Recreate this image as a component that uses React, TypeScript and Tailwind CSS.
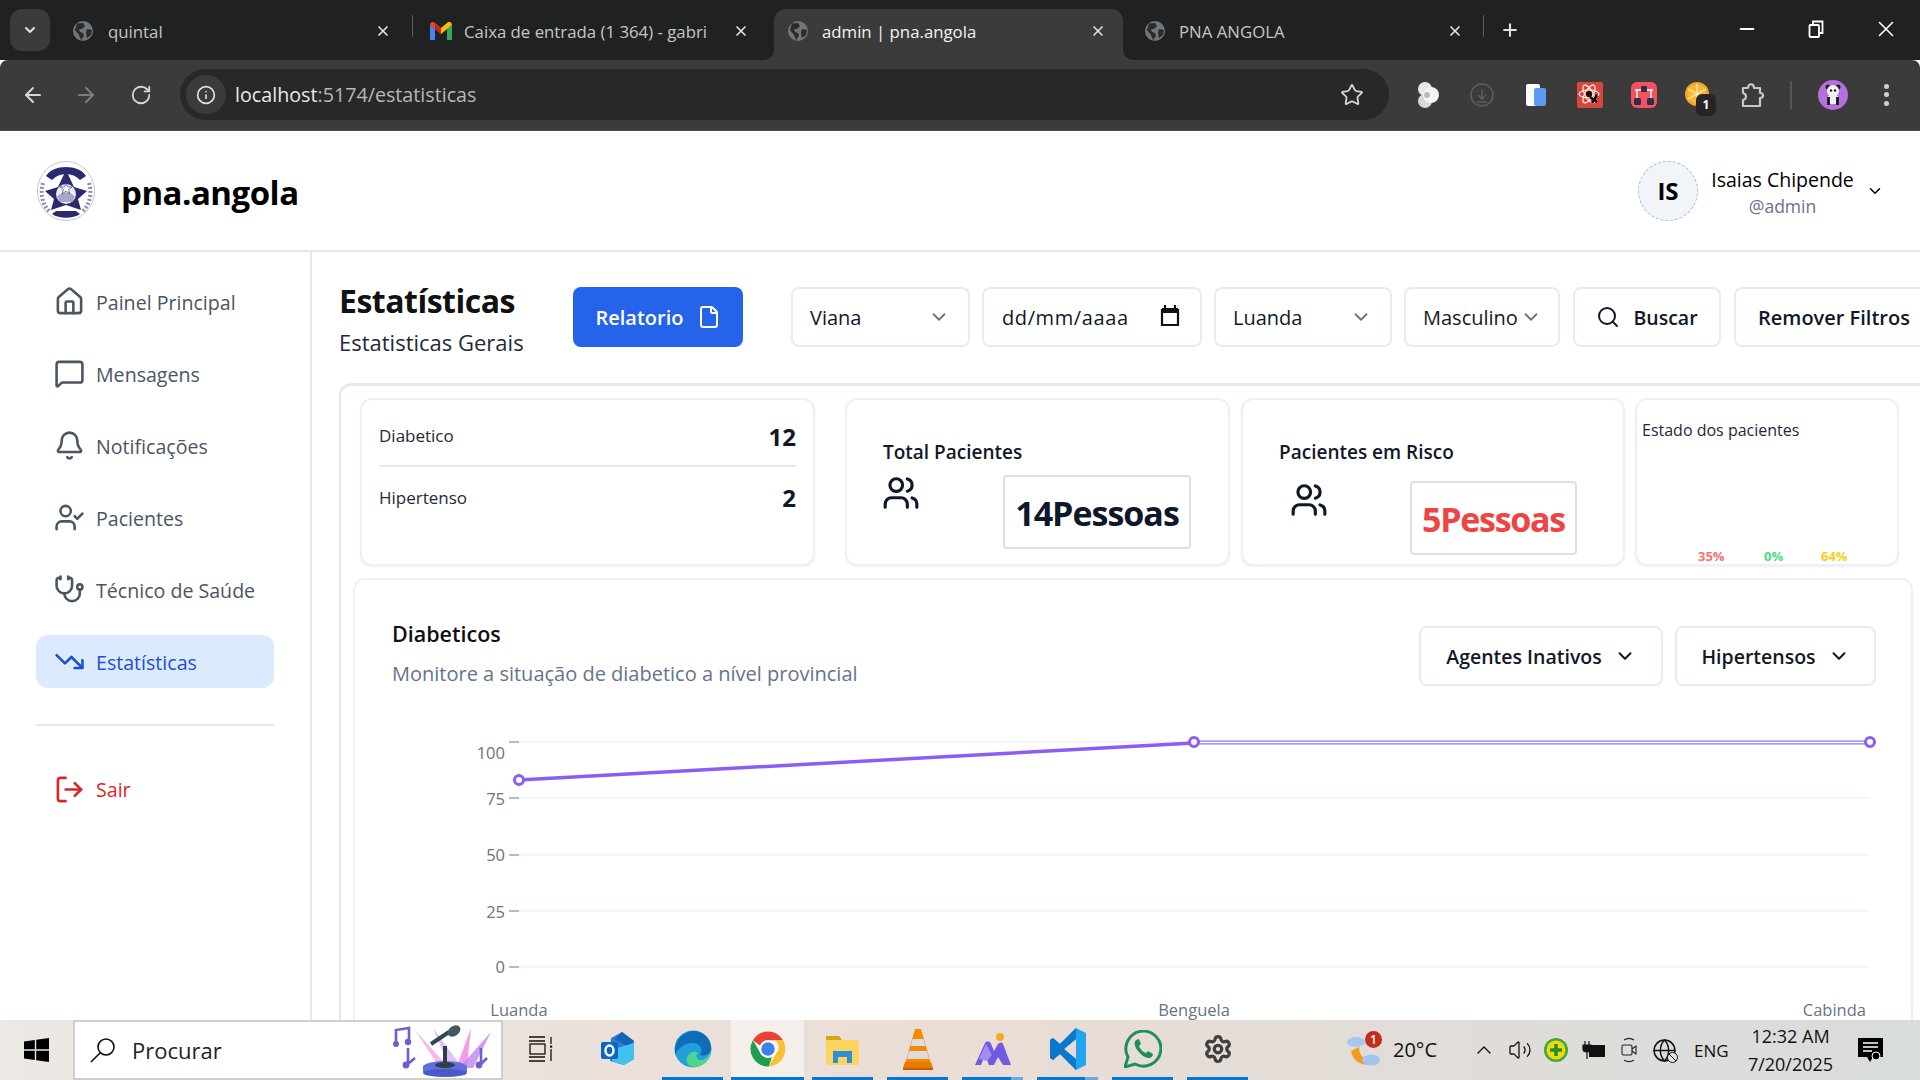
import React from "react";
import { ArrowLeft, ArrowRight, RotateCw, Info, Star, Minus, X, Plus, ChevronDown, ChevronUp, House, MessageSquare, Bell, UserCheck, Stethoscope, TrendingDown, LogOut, File, Search, Users, Volume2, Globe, Settings } from "lucide-react";

const TabGlobe = () => (
  <svg width="20" height="20" viewBox="0 0 20 20" className="shrink-0">
    <circle cx="10" cy="10" r="10" fill="#70757a" />
    <path d="M4 2.5 L10 2 L12 5 L9 8 L6 8 L7 11 L10 12 L11 15 L8 19 L6 14 L2 9 Z M14 8 L19 9 L18 14 L14 17 L13 12 Z" fill="#2a2c2c" />
  </svg>
);

const Gmail = () => (
  <svg width="22" height="18" viewBox="0 0 22 18" className="shrink-0">
    <path d="M0 3 L0 18 L5 18 L5 7 Z" fill="#4285f4" />
    <path d="M17 7 L17 18 L22 18 L22 3 Z" fill="#34a853" />
    <path d="M0 3 C0 0 3 -1 5 1 L11 6 L11 12 L0 3 Z" fill="#ea4335" />
    <path d="M11 6 L17 1 C19 -1 22 0 22 3 L11 12 Z" fill="#fbbc04" />
    <path d="M5 2 L11 7 L11 12 L5 7 Z" fill="#c5221f" />
  </svg>
);

const Tab = ({ w, pl, pr, gap, icon, text, active }: { w: string; pl: string; pr: string; gap: string; icon: React.ReactNode; text: string; active?: boolean }) => (
  <div className={`relative flex h-[51px] shrink-0 items-center pb-[8px] ${w} ${pl} ${pr} ${gap} ${active ? "rounded-t-xl bg-[#3b3b3b]" : ""}`}>
    {active && (
      <>
        <span className="absolute bottom-0 left-[-10px] h-[10px] w-[10px] bg-[#3b3b3b]"><span className="block h-full w-full rounded-br-[10px] bg-[#202221]" /></span>
        <span className="absolute bottom-0 right-[-10px] h-[10px] w-[10px] bg-[#3b3b3b]"><span className="block h-full w-full rounded-bl-[10px] bg-[#202221]" /></span>
      </>
    )}
    {icon}
    <span className={`mt-[2px] min-w-0 flex-1 overflow-hidden text-[16.8px] whitespace-nowrap ${active ? "text-[#f1f3f4]" : "text-[#c4c7c5]"}`}>{text}</span>
    <X size={16} strokeWidth={2.5} className="shrink-0 text-[#e3e3e3]" />
  </div>
);

const Sep = () => <div className="mb-[9px] h-[22px] w-px shrink-0 self-center bg-[#5a5c5c]" />;

const Ext = ({ children }: { children: React.ReactNode }) => (
  <div className="flex h-full w-[54px] shrink-0 items-center justify-center">{children}</div>
);

const Browser = () => (
  <div className="shrink-0 [font-family:'Open_Sans',sans-serif]">
    <div className="flex h-[60px] items-end bg-[#202221]">
      <div className="mb-[9px] ml-[10px] flex h-[42px] w-[40px] shrink-0 items-center justify-center rounded-xl bg-[#3b3b3b]">
        <ChevronDown size={16} strokeWidth={3} className="text-[#e3e3e3]" />
      </div>
      <div className="w-[12px] shrink-0" />
      <Tab w="w-[350px]" pl="pl-[11px]" pr="pr-[21px]" gap="gap-[15px]" icon={<TabGlobe />} text="quintal" />
      <Sep />
      <Tab w="w-[361px]" pl="pl-[17px]" pr="pr-[25px]" gap="gap-[12px]" icon={<Gmail />} text="Caixa de entrada (1 364) - gabri" />
      <Tab active w="w-[349px]" pl="pl-[14px]" pr="pr-[17px]" gap="gap-[14px]" icon={<TabGlobe />} text="admin | pna.angola" />
      <Tab w="w-[360px]" pl="pl-[22px]" pr="pr-[20px]" gap="gap-[14px]" icon={<TabGlobe />} text="PNA ANGOLA" />
      <Sep />
      <div className="mb-[9px] flex h-[42px] w-[52px] shrink-0 items-center justify-center">
        <Plus size={20} strokeWidth={2.5} className="text-[#e3e3e3]" />
      </div>
      <div className="ml-auto flex h-[60px] shrink-0 items-center pb-[3px] text-white">
        <div className="flex w-[68px] justify-center"><Minus size={22} strokeWidth={2} /></div>
        <div className="flex w-[70px] justify-center">
          <svg width="16" height="18" viewBox="0 0 16 18" fill="none" stroke="white" strokeWidth="1.8"><rect x="1.5" y="5" width="9.5" height="12" rx="1" /><path d="M5 5 V1.5 H14.5 V13 H11" /></svg>
        </div>
        <div className="flex w-[69px] justify-center"><X size={26} strokeWidth={1.5} /></div>
      </div>
    </div>
    <div className="flex h-[71px] items-center rounded-t-lg border-b border-[#4a4a4a] bg-[#3b3b3b] pb-[1px]">
      <div className="flex w-[66px] shrink-0 justify-center"><ArrowLeft size={24} className="text-[#d5d5d5]" strokeWidth={2} /></div>
      <div className="flex w-[40px] shrink-0 justify-center"><ArrowRight size={24} className="text-[#7d7d7d]" strokeWidth={2} /></div>
      <div className="ml-[15px] flex w-[40px] shrink-0 justify-center"><RotateCw size={22} className="text-[#d5d5d5]" strokeWidth={2} /></div>
      <div className="ml-[19px] flex h-[51px] w-[1209px] shrink-0 items-center rounded-full bg-[#282828] pl-[6px]">
        <div className="flex h-[39px] w-[40px] items-center justify-center rounded-full bg-[#3b3b3b]"><Info size={20} className="text-[#e3e3e3]" strokeWidth={2} /></div>
        <span className="ml-[9px] text-[19.7px] leading-none text-[#e8eaed]">localhost<span className="text-[#b5b8bb]">:5174/estatisticas</span></span>
        <Star size={24} strokeWidth={1.8} className="mr-[25px] ml-auto text-[#d5d5d5]" />
      </div>
      <div className="ml-[12px] flex h-full shrink-0 items-center">
        <Ext>
          <svg width="24" height="26" viewBox="0 0 24 26"><circle cx="9" cy="7" r="7" fill="#e8e8e8" /><circle cx="9" cy="19" r="7" fill="#d8d8d8" /><circle cx="15" cy="13" r="8" fill="#f4f4f4" /><circle cx="11" cy="13" r="3" fill="#bbb" /></svg>
        </Ext>
        <Ext>
          <svg width="26" height="26" viewBox="0 0 26 26" fill="none" stroke="#5c5c5c" strokeWidth="1.6"><circle cx="13" cy="13" r="11" /><path d="M13 7 V17 M9 13 L13 17 L17 13 M8 20 H18" /></svg>
        </Ext>
        <Ext>
          <svg width="22" height="24" viewBox="0 0 22 24"><rect x="1" y="1" width="14" height="22" rx="2" fill="#fff" /><rect x="9" y="5" width="12" height="18" rx="2" fill="#5c9cf5" /></svg>
        </Ext>
        <Ext>
          <svg width="26" height="26" viewBox="0 0 26 26"><rect width="26" height="26" rx="2" fill="#d9473a" /><g fill="none" stroke="#fff" strokeWidth="1.1"><ellipse cx="12" cy="12" rx="10" ry="4" /><ellipse cx="12" cy="12" rx="10" ry="4" transform="rotate(60 12 12)" /><ellipse cx="12" cy="12" rx="10" ry="4" transform="rotate(120 12 12)" /></g><circle cx="12" cy="12" r="3" fill="#200" /><path d="M13 15 L20 20 M15 21 L20 13" stroke="#111" strokeWidth="2.4" /></svg>
        </Ext>
        <Ext>
          <svg width="26" height="26" viewBox="0 0 26 26"><rect width="26" height="26" rx="6" fill="#f4525e" /><rect x="10" y="4" width="6" height="6" rx="1" fill="#27324a" /><rect x="3" y="16" width="7" height="7" rx="1.5" fill="#27324a" /><rect x="16" y="16" width="7" height="7" rx="1.5" fill="#27324a" /><path d="M4 8 H10 M16 8 H22 M6 8 V16 M20 8 V16" stroke="#fff" strokeWidth="1.4" fill="none" /></svg>
        </Ext>
        <Ext>
          <div className="relative h-[26px] w-[26px]">
            <svg width="24" height="24" viewBox="0 0 24 24"><circle cx="12" cy="12" r="12" fill="#f5a623" /><circle cx="12" cy="12" r="9.5" fill="#fbb836" /><path d="M12 12 L12 2 M12 12 L21 7 M12 12 L21 17 M12 12 L12 22 M12 12 L3 17 M12 12 L3 7" stroke="#ffe9b5" strokeWidth="1.3" /></svg>
            <span className="absolute top-[12px] left-[11px] flex h-[22px] w-[20px] items-center justify-center rounded-md bg-[#252525] text-[12px] leading-none font-bold text-white">1</span>
          </div>
        </Ext>
        <Ext>
          <svg width="26" height="26" viewBox="0 0 26 26" fill="none" stroke="#c7c7c7" strokeWidth="2.2" strokeLinejoin="round"><path d="M4 6 H9 C9 1 15 1 15 6 H21 V11 C25 11 25 16 21 16 V24 H4 V18 C8 17 8 12 4 11 Z" /></svg>
        </Ext>
        <div className="ml-[11px] h-[28px] w-[2px] shrink-0 bg-[#565656]" />
        <div className="ml-[26px] flex h-[30px] w-[30px] shrink-0 items-center justify-center rounded-full bg-[#b56fe0]">
          <svg width="18" height="24" viewBox="0 0 18 24"><circle cx="4" cy="4" r="2.5" fill="#222" /><circle cx="14" cy="4" r="2.5" fill="#222" /><circle cx="9" cy="8" r="6" fill="#f2f2f2" /><rect x="4" y="13" width="10" height="8" fill="#f2f2f2" /><path d="M3 14 H6 V22 H3 Z M12 14 H15 V22 H12 Z" fill="#222" /><circle cx="7" cy="7.5" r="1.2" fill="#222" /><circle cx="11" cy="7.5" r="1.2" fill="#222" /></svg>
        </div>
        <div className="ml-[36px] flex h-[22px] w-[6px] shrink-0 flex-col justify-between">
          <span className="h-[5px] w-[5px] rounded-full bg-[#cfcfcf]" />
          <span className="h-[5px] w-[5px] rounded-full bg-[#cfcfcf]" />
          <span className="h-[5px] w-[5px] rounded-full bg-[#cfcfcf]" />
        </div>
      </div>
    </div>
  </div>
);

const Emblem = () => (
  <svg width="58" height="60" viewBox="0 0 58 60" className="shrink-0">
    <ellipse cx="29" cy="30" rx="28.5" ry="29.5" fill="#fff" stroke="#c5c6da" strokeWidth="1" />
    <path d="M6 22 C3 32 5 44 13 51 M52 22 C55 32 53 44 45 51" stroke="#8c8fb5" strokeWidth="4" fill="none" strokeDasharray="2 2" />
    <path d="M9 15 C16 3 42 3 49 15 L43 19 C36 11 22 11 15 19 Z" fill="#2c2a6e" />
    <path d="M8 30 L21 26 L29 9 L37 26 L50 30 L41 38 L44 49 L29 44 L14 49 L17 38 Z" fill="#2c2a6e" />
    <circle cx="29" cy="33" r="10" fill="#ecedf5" />
    <path d="M20 36 C24 30 34 30 38 36 L35 41 H23 Z" fill="#a8a8c8" />
    <path d="M29 22 L30.6 26 L35 26 L31.5 28.5 L33 33 L29 30 L25 33 L26.5 28.5 L23 26 L27.4 26 Z" fill="#fff" stroke="#2c2a6e" strokeWidth="0.6" />
    <path d="M15 53 C22 58 36 58 43 53 L39 50 H19 Z" fill="#2c2a6e" />
  </svg>
);

const Header = () => (
  <div className="flex h-[121px] shrink-0 items-center border-b-2 border-[#e5e7eb] bg-white pr-[36px] pl-[37px]">
    <Emblem />
    <span className="mt-[3px] ml-[26px] text-[33px] leading-none font-bold tracking-[-0.5px] text-black">pna.angola</span>
    <div className="ml-auto flex items-center">
      <div className="flex h-[60px] w-[60px] shrink-0 items-center justify-center rounded-full border border-dashed border-[#a9b9dc] bg-[#f1f5f9] text-[24px] font-bold text-black">IS</div>
      <div className="mt-[3px] ml-[12px] flex w-[145px] flex-col items-center">
        <span className="text-[19.5px] leading-[28px] whitespace-nowrap text-black">Isaias Chipende</span>
        <span className="text-[17.5px] leading-[24px] text-[#64748b]">@admin</span>
      </div>
      <ChevronDown size={18} strokeWidth={2} className="ml-[11px] shrink-0 text-black" />
    </div>
  </div>
);

const navItems = [
  { label: "Painel Principal", Icon: House },
  { label: "Mensagens", Icon: MessageSquare },
  { label: "Notificações", Icon: Bell },
  { label: "Pacientes", Icon: UserCheck },
  { label: "Técnico de Saúde", Icon: Stethoscope },
  { label: "Estatísticas", Icon: TrendingDown, active: true },
];

const Sidebar = () => (
  <div className="flex w-[312px] shrink-0 flex-col border-r-2 border-[#e5e7eb] bg-white px-[36px] pt-[23px]">
    <div className="flex flex-col gap-[19px]">
      {navItems.map(({ label, Icon, active }) => (
        <div key={label} className={`flex h-[53px] items-center gap-[11px] rounded-xl pl-[18px] text-[19.6px] ${active ? "bg-[#dbeafe] text-[#1d4ed8]" : "text-[#4b5563]"}`}>
          <Icon size={31} strokeWidth={2} className="shrink-0" />
          <span className="mt-[2px]">{label}</span>
        </div>
      ))}
    </div>
    <div className="mt-[36px] h-[2px] bg-[#e5e7eb]" />
    <div className="mt-[37px] flex h-[53px] items-center gap-[11px] pl-[18px] text-[19.6px] text-[#dc2626]">
      <LogOut size={31} strokeWidth={2} className="shrink-0" />
      <span>Sair</span>
    </div>
  </div>
);

const btn = "flex h-[60px] shrink-0 items-center rounded-lg border-2 border-[#e8ebf1] bg-white pt-[2px] text-[20px] text-[#111827]";

const Filters = () => (
  <div className="flex items-start">
    <div className="w-[234px] shrink-0">
      <div className="mt-[-4px] text-[32px] leading-[36px] font-bold tracking-[-0.5px] text-[#111]">Estatísticas</div>
      <div className="mt-[9px] text-[22px] leading-[28px] whitespace-nowrap text-[#1f2937]">Estatisticas Gerais</div>
    </div>
    <div className="flex h-[60px] w-[170px] shrink-0 items-center justify-center gap-[13px] rounded-lg bg-[#2563eb] pt-[2px] text-[20px] font-semibold text-white">
      Relatorio <File size={24} strokeWidth={2} className="mt-[-3px]" />
    </div>
    <div className={`${btn} ml-[48px] w-[179px] justify-between pr-[18px] pl-[17px]`}>Viana <ChevronDown size={22} className="mt-[-2px] text-[#6b7280]" /></div>
    <div className={`${btn} ml-[12px] w-[220px] justify-between pr-[20px] pl-[18px]`}>
      <span className="tracking-[0.6px]">dd/mm/aaaa</span>
      <svg width="20" height="22" viewBox="0 0 20 22" fill="none" className="mt-[-4px]"><path d="M2 5 H18 V20 H2 Z" stroke="#111" strokeWidth="2.2" /><rect x="2" y="3" width="16" height="5" fill="#111" /><path d="M5 0 V4 M15 0 V4" stroke="#111" strokeWidth="2.2" /></svg>
    </div>
    <div className={`${btn} ml-[12px] w-[178px] justify-between pr-[18px] pl-[17px]`}>Luanda <ChevronDown size={22} className="mt-[-2px] text-[#6b7280]" /></div>
    <div className={`${btn} ml-[12px] w-[156px] justify-between pr-[16px] pl-[17px]`}>Masculino <ChevronDown size={22} className="mt-[-2px] shrink-0 text-[#6b7280]" /></div>
    <div className={`${btn} ml-[13px] w-[148px] justify-center gap-[13px] font-semibold`}><Search size={24} strokeWidth={2} className="mt-[-2px]" /> <span className="text-[19.5px]">Buscar</span></div>
    <div className={`${btn} ml-[13px] w-[200px] pl-[22px] text-[19px] font-semibold whitespace-nowrap`}>Remover Filtros</div>
  </div>
);

const card = "shrink-0 rounded-xl border-2 border-[#eef0f5] bg-white shadow-[0_1px_2px_rgba(0,0,0,0.06)]";

const StatCards = () => (
  <div className="flex pl-[19px]">
    <div className={`${card} h-[168px] w-[455px] px-[17px] pt-[21px]`}>
      <div className="flex h-[46px] items-start justify-between border-b-2 border-[#e2e8f0]">
        <span className="mt-[1px] text-[17px] leading-[28px] text-[#1f2937]">Diabetico</span>
        <span className="text-[24px] leading-[32px] font-bold text-[#111827]">12</span>
      </div>
      <div className="mt-[15px] flex items-start justify-between">
        <span className="mt-[2px] text-[17px] leading-[28px] text-[#1f2937]">Hipertenso</span>
        <span className="text-[24px] leading-[32px] font-bold text-[#111827]">2</span>
      </div>
    </div>
    <div className={`${card} ml-[30px] h-[168px] w-[385px] pt-[38px] pl-[36px]`}>
      <div className="text-[19px] leading-[28px] font-semibold text-[#111827]">Total Pacientes</div>
      <div className="flex items-start">
        <Users size={38} strokeWidth={2} className="mt-[8px] ml-[-1px] shrink-0 text-[#0f172a]" />
        <div className="mt-[9px] ml-[83px] flex h-[74px] w-[188px] items-center justify-center rounded border-2 border-[#dcdfe4] pt-[3px] text-[34px] font-bold tracking-[-1px] text-[#0f172a]">14Pessoas</div>
      </div>
    </div>
    <div className={`${card} ml-[11px] h-[168px] w-[384px] pt-[38px] pl-[36px]`}>
      <div className="text-[19px] leading-[28px] font-semibold text-[#111827]">Pacientes em Risco</div>
      <div className="flex items-start">
        <Users size={38} strokeWidth={2} className="mt-[15px] ml-[11px] shrink-0 text-[#0f172a]" />
        <div className="mt-[15px] ml-[82px] flex h-[74px] w-[167px] items-center justify-center rounded border-2 border-[#dcdfe4] pt-[3px] text-[34px] font-bold tracking-[-1.3px] text-[#ef4444]">5Pessoas</div>
      </div>
    </div>
    <div className={`${card} ml-[10px] flex h-[168px] w-[264px] flex-col pt-[18px] pl-[5px]`}>
      <div className="text-[16px] leading-[24px] font-medium text-[#1e293b]">Estado dos pacientes</div>
      <div className="mt-auto mb-[-1px] ml-[56px] flex text-[13px] leading-[18px] font-bold">
        <span className="w-[66px] text-[#f87171]">35%</span>
        <span className="w-[57px] text-[#4ade80]">0%</span>
        <span className="text-[#facc15]">64%</span>
      </div>
    </div>
  </div>
);

const Chart = () => {
  const rows: [string, number, number][] = [["100", 22, 33], ["75", 78, 79], ["50", 135, 135], ["25", 191, 192], ["0", 247, 247]];
  return (
    <svg width="1556" height="310" viewBox="0 0 1556 310" className="mt-[32px] block" style={{ fontFamily: "'Open Sans', sans-serif" }}>
      {rows.map(([t, y, ty]) => (
        <g key={t}>
          <line x1="164" x2="1515" y1={y} y2={y} stroke="#f1f5f9" strokeWidth="1.5" />
          <line x1="154" x2="164" y1={y} y2={y} stroke="#9ca3af" strokeWidth="1.5" />
          <text x="150" y={ty + 6} textAnchor="end" fontSize="16.5" fill="#6b7280">{t}</text>
        </g>
      ))}
      <line x1="164" y1="60" x2="839" y2="23" stroke="#8b5cf6" strokeWidth="3.5" />
      <line x1="839" y1="22.5" x2="1515" y2="22.5" stroke="#9274ee" strokeWidth="4" />
      <line x1="839" y1="22.5" x2="1515" y2="22.5" stroke="#ffffff" strokeWidth="1.5" />
      {[[164, 60], [839, 22], [1515, 22]].map(([x, y]) => (
        <circle key={x} cx={x} cy={y} r="4.5" fill="#fff" stroke="#8b5cf6" strokeWidth="3" />
      ))}
      <text x="164" y="296" textAnchor="middle" fontSize="16.5" fill="#6b7280">Luanda</text>
      <text x="839" y="296" textAnchor="middle" fontSize="16.5" fill="#6b7280">Benguela</text>
      <text x="1511" y="296" textAnchor="end" fontSize="16.5" fill="#6b7280">Cabinda</text>
    </svg>
  );
};

const ChartCard = () => (
  <div className="mt-[12px] ml-[12px] w-[1560px] rounded-t-xl border-2 border-[#eef0f5] bg-white pt-[46px]">
    <div className="flex items-start justify-between pr-[35px] pl-[37px]">
      <div>
        <div className="mt-[-3px] text-[21.5px] leading-[22px] font-semibold text-[#0f0f14]">Diabeticos</div>
        <div className="mt-[15px] text-[20px] leading-[28px] text-[#64748b]">Monitore a situação de diabetico a nível provincial</div>
      </div>
      <div className="flex gap-[12px]">
        <div className={`${btn} w-[244px] justify-center gap-[12px] font-semibold`}><span className="text-[19.5px]">Agentes Inativos</span> <ChevronDown size={22} strokeWidth={2.2} className="mt-[-2px]" /></div>
        <div className={`${btn} w-[201px] justify-center gap-[12px] font-semibold`}><span className="text-[19.5px]">Hipertensos</span> <ChevronDown size={22} strokeWidth={2.2} className="mt-[-2px]" /></div>
      </div>
    </div>
    <Chart />
  </div>
);

const Main = () => (
  <div className="min-w-0 flex-1 overflow-hidden bg-white pt-[35px] pl-[27px]">
    <div className="w-[1700px]">
      <Filters />
      <div className="mt-[27px] w-[1640px] rounded-tl-xl border-t-[3px] border-l-2 border-[#e5e7ee] pt-[12px]">
        <StatCards />
        <ChartCard />
      </div>
    </div>
  </div>
);

const ChromeLogo = () => (
  <svg width="38" height="38" viewBox="0 0 48 48">
    <path d="M24 2 A22 22 0 0 1 43 13 H24 A11 11 0 0 0 14 19.5 L5 13 A22 22 0 0 1 24 2 Z" fill="#ea4335" />
    <path d="M43 13 A22 22 0 0 1 25 46 L34.5 29.5 A11 11 0 0 0 33.5 13 Z" fill="#fbc02d" />
    <path d="M25 46 A22 22 0 0 1 5 13 L14.5 29.5 A11 11 0 0 0 29 34 Z" fill="#1e9e50" />
    <circle cx="24" cy="24" r="11" fill="#fff" />
    <circle cx="24" cy="24" r="8.5" fill="#3b82f0" />
  </svg>
);

const Slot = ({ children, cls = "", bar = true, lite }: { children: React.ReactNode; cls?: string; bar?: boolean; lite?: string }) => (
  <div className={`flex h-full shrink-0 flex-col ${cls}`}>
    <div className="flex flex-1 items-center justify-center">{children}</div>
    <div className="flex h-[3px]">
      {bar && <div className="flex-1 bg-[#0078d4]" />}
      {bar && lite && <div className={`${lite} bg-[#6aa8dd]`} />}
    </div>
  </div>
);

const Taskbar = () => (
  <div className="flex h-[60px] shrink-0 items-stretch bg-linear-to-r from-[#ece8e3] via-[#eaddd5] to-[#d8dcdc] [font-family:'Open_Sans',sans-serif]">
    <div className="flex w-[72px] shrink-0 items-center justify-center">
      <svg width="25" height="24" viewBox="0 0 25 24"><path d="M0 3.5 L10.8 2 V11.2 H0 Z M12.2 1.8 L25 0 V11.2 H12.2 Z M0 12.8 H10.8 V22 L0 20.5 Z M12.2 12.8 H25 V24 L12.2 22.2 Z" fill="#000" /></svg>
    </div>
    <div className="ml-[1px] flex w-[430px] shrink-0 items-center border-2 border-[#cfcfcf] bg-white pl-[14px]">
      <svg width="27" height="27" viewBox="0 0 27 27" fill="none" stroke="#111" strokeWidth="1.6"><circle cx="17" cy="10" r="8" /><path d="M11 16 L2 25" /></svg>
      <span className="ml-[16px] text-[22px] leading-none text-[#222]">Procurar</span>
      <svg width="104" height="56" viewBox="0 0 104 56" className="mr-[4px] ml-auto">
        <path d="M22 8 L48 48 L58 48 Z" fill="#f4a7e8" opacity="0.8" />
        <path d="M40 6 L56 44 L68 44 Z" fill="#d9b2f6" opacity="0.8" />
        <path d="M78 6 L64 44 L74 44 Z" fill="#f48ae0" opacity="0.85" />
        <path d="M98 10 L66 46 L80 46 Z" fill="#c38af0" opacity="0.85" />
        <ellipse cx="52" cy="45" rx="22" ry="6" fill="#5f6fe0" />
        <rect x="30" y="44" width="44" height="6" fill="#5f6fe0" />
        <ellipse cx="52" cy="51" rx="22" ry="4" fill="#4a58c8" />
        <ellipse cx="52" cy="43" rx="10" ry="3" fill="#2f3f46" />
        <rect x="50" y="24" width="4" height="18" fill="#2f3f46" />
        <path d="M38 22 L56 10" stroke="#32474d" strokeWidth="4" />
        <ellipse cx="61" cy="9" rx="7" ry="5" transform="rotate(-35 61 9)" fill="#43595f" />
        <path d="M3 20 L3 8 L16 6 V20" stroke="#6c5fd0" strokeWidth="2.6" fill="none" />
        <circle cx="3" cy="22" r="3" fill="#6c5fd0" /><circle cx="15" cy="20" r="3.2" fill="#6c5fd0" />
        <path d="M15 26 V42 L22 36" stroke="#6c5fd0" strokeWidth="2.6" fill="none" /><circle cx="13" cy="43" r="3.4" fill="#6c5fd0" />
        <path d="M88 26 V42 L94 36" stroke="#6c5fd0" strokeWidth="2.6" fill="none" /><circle cx="86" cy="43" r="3.4" fill="#6c5fd0" />
      </svg>
    </div>
    <Slot bar={false} cls="ml-[7px] w-[61px]">
      <svg width="26" height="26" viewBox="0 0 26 26" fill="none" stroke="#111" strokeWidth="1.3"><path d="M1 1 H17 M1 5 H17 M1 21 H17 M1 25 H17" /><rect x="2" y="8" width="15" height="10" /><path d="M23 1 V8 M23 13 V25" /><rect x="22" y="9.5" width="2.2" height="2.2" fill="#111" stroke="none" /></svg>
    </Slot>
    <Slot bar={false} cls="ml-[16px] w-[61px]">
      <svg width="36" height="36" viewBox="0 0 36 36"><path d="M11 7 L22 1 L34 10 V28 L24 34 L10 30 Z" fill="#2e7fd2" /><path d="M22 1 L34 10 L27 15 L14 8 Z" fill="#1466b5" /><path d="M14 18 L34 12 V28 L24 34 L12 30 Z" fill="#3fc3ee" /><rect x="1" y="11" width="17" height="17" rx="2" fill="#0c66c2" /><ellipse cx="9.5" cy="19.5" rx="4" ry="5" fill="none" stroke="#fff" strokeWidth="2.4" /></svg>
    </Slot>
    <Slot cls="ml-[14px] w-[61px]">
      <svg width="38" height="38" viewBox="0 0 38 38"><circle cx="19" cy="19" r="18.5" fill="#22a0dc" /><path d="M1 18 C3 6 13 1 20 1 C30 1 37 9 37 18 C37 24 31 27 26 25 C30 20 26 13 19 13 C10 13 4 18 1 25 Z" fill="#0f6cb8" /><path d="M37 20 C37 30 28 37 20 37 C15 37 12 33 13 28 C14 23 20 20 24 23 C21 26 23 31 28 30 C32 29 36 25 37 20 Z" fill="#4fd68a" /></svg>
    </Slot>
    <Slot cls="ml-[8px] w-[73px] bg-white/50"><ChromeLogo /></Slot>
    <Slot cls="ml-[8px] w-[61px]">
      <svg width="33" height="32" viewBox="0 0 33 32"><path d="M0 3 H13 L16 7 H32 V11 H0 Z" fill="#d9a40f" /><rect y="7" width="33" height="25" rx="1.5" fill="#fbd560" /><path d="M7 18 H26 V30 H21 V24 H12 V30 H7 Z" fill="#2f8fd6" /></svg>
    </Slot>
    <Slot cls="ml-[14px] w-[61px]">
      <svg width="32" height="42" viewBox="0 0 32 42"><path d="M13 1 H19 L29 36 H3 Z" fill="#f58a06" /><path d="M10.5 11 H21.5 L23.5 18 H8.5 Z M7 23 H25 L27 31 H5 Z" fill="#dcdcdc" /><path d="M3 34 H29 L31 40 H1 Z" fill="#e97a00" /><path d="M1 40 H31 V42 H1 Z" fill="#c45f00" /></svg>
    </Slot>
    <Slot cls="ml-[14px] w-[61px]" lite="w-[12px]">
      <svg width="36" height="32" viewBox="0 0 36 32"><circle cx="25" cy="4" r="4" fill="#f5a623" /><path d="M0 32 L10 10 C12 8 15 8 16 11 L19 18 L23 11 C25 9 27 9 28 11 L36 32 H28 L23 24 L19 32 H14 L10 22 L6 32 Z" fill="#6f5be0" /><path d="M4 26 L11 11 L17 22 L12 28 Z" fill="#a58cf0" /></svg>
    </Slot>
    <Slot cls="ml-[14px] w-[61px]" lite="w-[13px]">
      <svg width="36" height="42" viewBox="0 0 36 42"><path d="M26 0 L36 5 V37 L26 42 L10 26 L3 32 L0 30 V12 L3 10 L10 16 Z M26 11 L14 21 L26 31 Z" fill="#22a5ee" /><path d="M26 0 L10 16 L3 10 L0 12 V30 L3 32 L10 26 L26 42 V31 L14 21 L26 11 Z" fill="#0a78cc" /></svg>
    </Slot>
    <Slot cls="ml-[14px] w-[61px]">
      <svg width="38" height="38" viewBox="0 0 38 38"><path d="M1 37 L4 27 A17.5 17.5 0 1 1 11 34 Z" fill="none" stroke="#1f8f59" strokeWidth="3" /><path d="M12 10 C10 12 10 16 14 21 C18 26 22 28 25 28 C27 28 29 26 29 24 L24 21 L22 23 C20 23 16 19 15 16 L17 14 L15 9 Z" fill="#1f8f59" /></svg>
    </Slot>
    <Slot cls="ml-[14px] w-[61px]"><Settings size={30} strokeWidth={2.6} className="text-[#404040]" /></Slot>
    <div className="ml-[99px] flex shrink-0 items-center text-[#111]">
      <div className="relative h-[34px] w-[34px]">
        <svg width="34" height="36" viewBox="0 0 34 36"><path d="M4 18 A16 16 0 0 0 30 28 A14 14 0 0 1 12 14 Z" fill="#f59a23" /><ellipse cx="9" cy="9" rx="9" ry="5" fill="#a9c6ee" /><ellipse cx="24" cy="27" rx="9" ry="5.5" fill="#a3c4ef" /></svg>
        <span className="absolute top-[-2px] left-[18px] flex h-[17px] w-[17px] items-center justify-center rounded-full bg-[#c42b1c] text-[12px] leading-none font-semibold text-white">1</span>
      </div>
      <span className="ml-[12px] w-[43px] text-[20px] leading-none whitespace-nowrap">20°C</span>
      <ChevronUp size={24} strokeWidth={1.4} className="mx-[-3px] ml-[36px]" />
      <Volume2 size={24} strokeWidth={1.3} className="ml-[15px]" />
      <svg width="24" height="24" viewBox="0 0 24 24" className="ml-[12px]"><circle cx="12" cy="12" r="12" fill="#3cab3b" /><circle cx="12" cy="12" r="9.5" fill="#f4d90a" /><path d="M12 6 V18 M6 12 H18" stroke="#1e8f35" strokeWidth="3.5" /></svg>
      <svg width="25" height="20" viewBox="0 0 25 20" className="ml-[12px]"><path d="M5 1 V5 M9 1 V5 M3 5 H11 V9 C11 11 9 12 7 12 C5 12 3 11 3 9 Z M7 12 V19" stroke="#111" strokeWidth="1.2" fill="#111" /><rect x="9" y="5" width="16" height="12" fill="#111" /></svg>
      <svg width="16" height="26" viewBox="0 0 16 26" fill="none" stroke="#222" strokeWidth="1.1" className="ml-[16px]"><path d="M3 3 C6 1 10 1 13 3 M3 23 C6 25 10 25 13 23" /><rect x="1" y="8" width="10" height="10" rx="1.5" /><path d="M11 12 L15 9 V17 L11 14" /></svg>
      <div className="relative ml-[16px] h-[24px] w-[24px]">
        <Globe size={25} strokeWidth={1.4} className="absolute top-0 left-[-1px]" />
        <svg width="11" height="11" viewBox="0 0 11 11" className="absolute right-[-1px] bottom-[-1px]"><circle cx="5.5" cy="5.5" r="5" fill="#e8e0da" stroke="#111" /><path d="M2 2 L9 9" stroke="#111" /></svg>
      </div>
      <span className="ml-[17px] w-[36px] text-[17px] leading-none">ENG</span>
      <div className="ml-[18px] flex w-[85px] flex-col items-center text-[18px] leading-[28px] whitespace-nowrap">
        <span>12:32 AM</span>
        <span>7/20/2025</span>
      </div>
      <svg width="26" height="26" viewBox="0 0 26 26" className="ml-[25px]"><path d="M0 1 H25 V20 H15 L12 25 L9 20 H0 Z" fill="#000" /><path d="M5 6 H20 M5 10 H20 M5 14 H14" stroke="#fff" strokeWidth="1.3" /><circle cx="18" cy="19" r="4" fill="#000" stroke="#fff" /></svg>
    </div>
  </div>
);

export default function App() {
  return (
    <div className="flex h-[1080px] w-[1920px] flex-col overflow-hidden bg-white [font-family:'Open_Sans',sans-serif]">
      <Browser />
      <Header />
      <div className="flex min-h-0 flex-1">
        <Sidebar />
        <Main />
      </div>
      <Taskbar />
    </div>
  );
}
